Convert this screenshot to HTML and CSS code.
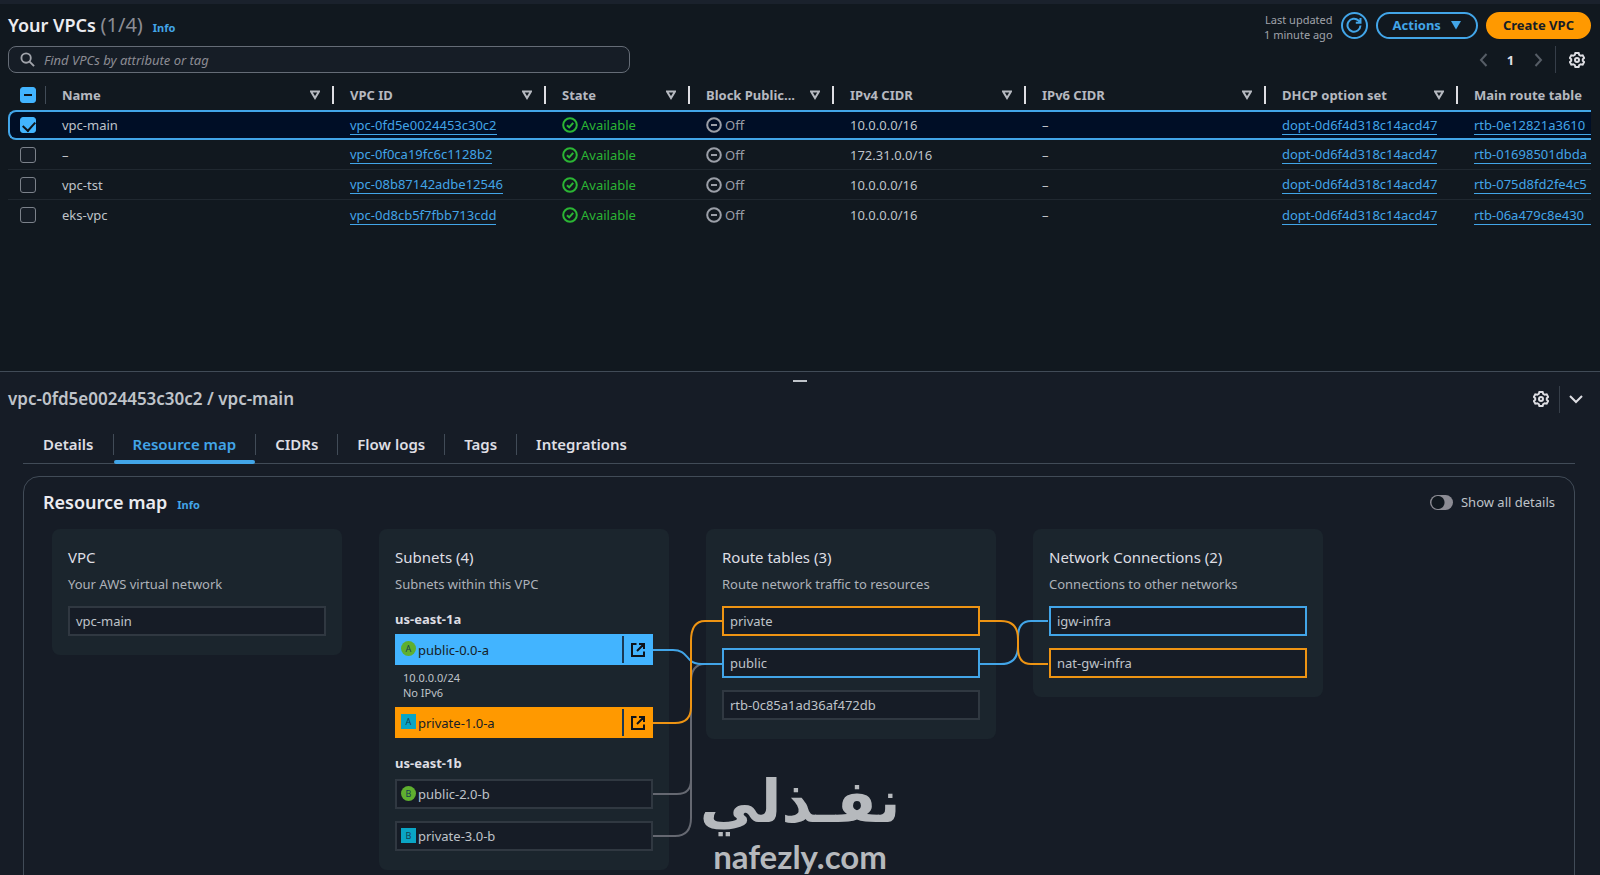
FILE: index.html
```html
<!DOCTYPE html>
<html lang="en">
<head>
<meta charset="utf-8">
<title>Your VPCs</title>
<link rel="stylesheet" href="styles.css">
</head>
<body>
<svg class="sprite" aria-hidden="true">
  <symbol id="gear" viewBox="0 0 16 16"><path d="M6.4 1h3.2l.6 1.9 1.5.9 2-.5 1.5 2.7-1.4 1.3v1.4l1.4 1.3-1.5 2.7-2-.5-1.5.9-.6 1.9H6.4l-.6-1.9-1.5-.9-2 .5L.8 10l1.4-1.3V7.300L.8 6l1.5-2.700 2 .5 1.500-.9z"/><circle cx="8" cy="8" r="2"/></symbol>
  <symbol id="sort" viewBox="0 0 10 10"><path d="M1 1.500h8L5 8z"/></symbol>
  <symbol id="ok" viewBox="0 0 16 16"><circle cx="8" cy="8" r="6.800"/><path d="M5 8.200l2.200 2.200 4-4.600"/></symbol>
  <symbol id="off" viewBox="0 0 16 16"><circle cx="8" cy="8" r="6.800"/><path d="M5 8h6"/></symbol>
  <symbol id="external" viewBox="0 0 16 16"><path d="M6.500 2H2v12h12V9.500M9 2h5v5M14 2L7 9"/></symbol>
</svg>

<main class="list">
  <header class="list-head">
    <h1 class="title">Your VPCs <span class="count">(1/4)</span></h1>
    <a class="info" href="#info">Info</a>
    <div class="actions">
      <p class="updated">Last updated<br>1 minute ago</p>
      <button class="btn round" aria-label="Refresh"><svg class="icon" viewBox="0 0 16 16"><path d="M14.500 8.500A6.500 6.500 0 1 1 12.500 3.500L14 5M14.500 1v4.800H9.800"/></svg></button>
      <button class="btn">Actions <svg class="caret" viewBox="0 0 10 10"><path d="M0 1h10L5 9.500z"/></svg></button>
      <button class="btn primary">Create VPC</button>
    </div>
  </header>
  <div class="tools">
    <label class="search">
      <svg class="icon" viewBox="0 0 16 16"><circle cx="6.500" cy="6.500" r="5"/><path d="M10.200 10.200L15 15"/></svg>
      <input type="search" aria-label="Find VPCs" placeholder="Find VPCs by attribute or tag">
    </label>
    <nav class="pager" aria-label="Pages">
      <button class="bare dim" aria-label="Previous page"><svg class="icon" viewBox="0 0 16 16"><path d="M10.500 2L5 8l5.500 6"/></svg></button>
      <button class="bare page">1</button>
      <button class="bare dim" aria-label="Next page"><svg class="icon" viewBox="0 0 16 16"><path d="M5.500 2L11 8l-5.500 6"/></svg></button>
      <button class="bare prefs" aria-label="Preferences"><svg class="icon"><use href="#gear"/></svg></button>
    </nav>
  </div>
  <div class="table-wrap">
    <table>
      <colgroup><col class="c-check"><col class="c-name"><col class="c-id"><col class="c-small"><col class="c-small"><col class="c-mid"><col class="c-v6"><col class="c-mid"><col class="c-mid"></colgroup>
      <thead>
        <tr>
          <th><input type="checkbox" class="some" aria-label="Select all"></th>
          <th><div class="th"><span>Name</span><svg class="sort"><use href="#sort"/></svg></div></th>
          <th><div class="th"><span>VPC ID</span><svg class="sort"><use href="#sort"/></svg></div></th>
          <th><div class="th"><span>State</span><svg class="sort"><use href="#sort"/></svg></div></th>
          <th><div class="th"><span>Block Public...</span><svg class="sort"><use href="#sort"/></svg></div></th>
          <th><div class="th"><span>IPv4 CIDR</span><svg class="sort"><use href="#sort"/></svg></div></th>
          <th><div class="th"><span>IPv6 CIDR</span><svg class="sort"><use href="#sort"/></svg></div></th>
          <th><div class="th"><span>DHCP option set</span><svg class="sort"><use href="#sort"/></svg></div></th>
          <th><div class="th"><span>Main route table</span></div></th>
        </tr>
      </thead>
      <tbody>
        <tr class="selected">
          <td><input type="checkbox" checked aria-label="Select vpc-main"></td><td>vpc-main</td>
          <td><a href="#v1">vpc-0fd5e0024453c30c2</a></td>
          <td><span class="state ok"><svg class="icon"><use href="#ok"/></svg>Available</span></td>
          <td><span class="state"><svg class="icon"><use href="#off"/></svg>Off</span></td>
          <td>10.0.0.0/16</td><td>–</td><td><a href="#d1">dopt-0d6f4d318c14acd47</a></td><td><a class="wide" href="#r1">rtb-0e12821a3610</a></td>
        </tr>
        <tr>
          <td><input type="checkbox" aria-label="Select unnamed VPC"></td><td>–</td>
          <td><a href="#v2">vpc-0f0ca19fc6c1128b2</a></td>
          <td><span class="state ok"><svg class="icon"><use href="#ok"/></svg>Available</span></td>
          <td><span class="state"><svg class="icon"><use href="#off"/></svg>Off</span></td>
          <td>172.31.0.0/16</td><td>–</td><td><a href="#d2">dopt-0d6f4d318c14acd47</a></td><td><a class="wide" href="#r2">rtb-01698501dbda</a></td>
        </tr>
        <tr>
          <td><input type="checkbox" aria-label="Select vpc-tst"></td><td>vpc-tst</td>
          <td><a href="#v3">vpc-08b87142adbe12546</a></td>
          <td><span class="state ok"><svg class="icon"><use href="#ok"/></svg>Available</span></td>
          <td><span class="state"><svg class="icon"><use href="#off"/></svg>Off</span></td>
          <td>10.0.0.0/16</td><td>–</td><td><a href="#d3">dopt-0d6f4d318c14acd47</a></td><td><a class="wide" href="#r3">rtb-075d8fd2fe4c5</a></td>
        </tr>
        <tr>
          <td><input type="checkbox" aria-label="Select eks-vpc"></td><td>eks-vpc</td>
          <td><a href="#v4">vpc-0d8cb5f7fbb713cdd</a></td>
          <td><span class="state ok"><svg class="icon"><use href="#ok"/></svg>Available</span></td>
          <td><span class="state"><svg class="icon"><use href="#off"/></svg>Off</span></td>
          <td>10.0.0.0/16</td><td>–</td><td><a href="#d4">dopt-0d6f4d318c14acd47</a></td><td><a class="wide" href="#r4">rtb-06a479c8e430</a></td>
        </tr>
      </tbody>
    </table>
  </div>
</main>

<section class="panel">
  <div class="handle"></div>
  <header class="panel-head">
    <h2 class="panel-title">vpc-0fd5e0024453c30c2 / vpc-main</h2>
    <button class="bare" aria-label="Panel preferences"><svg class="icon"><use href="#gear"/></svg></button>
    <button class="bare close" aria-label="Close panel"><svg class="icon" viewBox="0 0 16 16"><path d="M2 5l6 6 6-6"/></svg></button>
  </header>
  <div class="panel-body">
    <nav class="tabs" role="tablist">
      <button role="tab" class="tab">Details</button>
      <button role="tab" class="tab active" aria-selected="true">Resource map</button>
      <button role="tab" class="tab">CIDRs</button>
      <button role="tab" class="tab">Flow logs</button>
      <button role="tab" class="tab">Tags</button>
      <button role="tab" class="tab">Integrations</button>
    </nav>
    <div class="map">
      <header class="map-head">
        <h2 class="title">Resource map</h2>
        <a class="info" href="#map-info">Info</a>
        <label class="toggle"><input type="checkbox">Show all details</label>
      </header>
      <div class="board">
        <section class="card">
          <h3>VPC</h3>
          <p>Your AWS virtual network</p>
          <div class="nodes"><div class="node">vpc-main</div></div>
        </section>
        <section class="card">
          <h3>Subnets (4)</h3>
          <p>Subnets within this VPC</p>
          <h4>us-east-1a</h4>
          <div class="node fill-blue"><span class="badge public">A</span>public-0.0-a<a class="open" href="#s1" aria-label="Open public-0.0-a"><svg class="icon"><use href="#external"/></svg></a></div>
          <div class="detail">10.0.0.0/24<br>No IPv6</div>
          <div class="node fill-orange"><span class="badge">A</span>private-1.0-a<a class="open" href="#s2" aria-label="Open private-1.0-a"><svg class="icon"><use href="#external"/></svg></a></div>
          <h4 class="second">us-east-1b</h4>
          <div class="nodes">
            <div class="node"><span class="badge public">B</span>public-2.0-b</div>
            <div class="node"><span class="badge">B</span>private-3.0-b</div>
          </div>
        </section>
        <section class="card">
          <h3>Route tables (3)</h3>
          <p>Route network traffic to resources</p>
          <div class="nodes">
            <div class="node orange">private</div>
            <div class="node blue">public</div>
            <div class="node">rtb-0c85a1ad36af472db</div>
          </div>
        </section>
        <section class="card">
          <h3>Network Connections (2)</h3>
          <p>Connections to other networks</p>
          <div class="nodes">
            <div class="node blue">igw-infra</div>
            <div class="node orange">nat-gw-infra</div>
          </div>
        </section>
        <svg class="wires" viewBox="0 0 1270 340" aria-hidden="true">
          <path class="w-gray" d="M601 265h24q14 0 14-14M601 307h22q16 0 16-18V153q0-18 14-18h17"/>
          <path class="w-blue" d="M601 121h20c10 0 12 5 17 10s10 4 14 4h18"/>
          <path class="w-orange" d="M601 194h22q16 0 16-16v-66q0-20 14-20h17"/>
          <path class="w-blue" d="M927 135h22q17 0 17-18v-9q0-16 13-16h17"/>
          <path class="w-orange" d="M927 92h22q17 0 17 18v9q0 16 13 16h17"/>
        </svg>
      </div>
    </div>
  </div>
</section>

<div class="watermark">
  <span class="mark-ar" lang="ar" dir="rtl">نفـذلي</span>
  <span class="mark-en">nafezly.com</span>
</div>
</body>
</html>
```

FILE: styles.css
```css
* { box-sizing: border-box; }

body {
  margin: 0;
  height: 100vh;
  display: flex;
  flex-direction: column;
  overflow: hidden;
  position: relative;
  background: #11181f;
  color: #bfc3c9;
  font: 13px/18px "Noto Sans", "Open Sans", sans-serif;
}

h1, h2, h3, h4, p { margin: 0; }
button, input { font: inherit; color: inherit; }
a { color: #42a5e8; }

.sprite { display: none; }

.icon {
  width: 16px;
  height: 16px;
  flex: none;
  fill: none;
  stroke: currentColor;
  stroke-width: 2;
}

.list {
  flex: none;
  height: 371px;
  padding: 8px 9px 0 8px;
  border-top: 4px solid #1a212c;
}

.list-head { display: flex; align-items: center; height: 26px; }
.title { font-size: 18px; line-height: 26px; font-weight: 600; color: #ebebf0; }
.count { font-size: 20px; font-weight: 400; color: #8c8c94; }
.info { margin: 6px 0 0 10px; font-size: 11px; font-weight: 700; text-decoration: none; }
.actions { display: flex; align-items: center; gap: 8px; margin-left: auto; }
.updated { padding-top: 4px; font-size: 11px; line-height: 15px; text-align: right; color: #a0a3aa; }

.btn {
  display: flex;
  align-items: center;
  gap: 10px;
  height: 27px;
  padding: 0 15px;
  border: 2px solid #42a5e8;
  border-radius: 14px;
  background: none;
  color: #42a5e8;
  font-weight: 700;
}
.btn.round { width: 27px; padding: 0; justify-content: center; }
.btn.primary { border-color: #ff9900; background: #ff9900; color: #161d26; }
.caret { width: 10px; height: 10px; fill: currentColor; }

.tools { display: flex; justify-content: space-between; margin-top: 8px; }
.search {
  display: flex;
  align-items: center;
  gap: 9px;
  width: 622px;
  height: 27px;
  padding: 0 11px;
  border: 1px solid #656c76;
  border-radius: 8px;
  background: #161d26;
  color: #a0a3aa;
}
.search .icon { width: 15px; height: 15px; }
.search input { flex: 1; border: 0; padding: 0; outline: 0; background: none; }
.search input::placeholder { color: #8c8c94; font-style: italic; opacity: 1; }

.pager { display: flex; align-items: center; }
.bare {
  display: flex;
  align-items: center;
  justify-content: center;
  width: 27px;
  height: 27px;
  padding: 0;
  border: 0;
  background: none;
  color: #dedee3;
}
.dim { color: #565d66; }
.page { font-weight: 700; }
.prefs { width: 36px; margin-left: 4px; padding-left: 7px; border-left: 1px solid #363e49; }

.table-wrap { margin-top: 7px; overflow: hidden; }
table { width: 1642px; table-layout: fixed; border-collapse: separate; border-spacing: 0; }
.c-check { width: 38px; }
.c-name { width: 288px; }
.c-id { width: 212px; }
.c-small { width: 144px; }
.c-mid { width: 192px; }
.c-v6 { width: 240px; }
th, td { height: 30px; padding: 0 0 0 16px; text-align: left; white-space: nowrap; }
th:first-child, td:first-child { padding-left: 12px; }
th { padding-right: 0; color: #b6b9c0; }
.th { display: flex; align-items: center; justify-content: space-between; padding-right: 12px; height: 18px; border-right: 2px solid #dedee3; }
th:first-child { background: linear-gradient(#414b57, #414b57) right center / 1px 18px no-repeat; }
.sort { width: 10px; height: 10px; fill: none; stroke: currentColor; stroke-width: 2; }
tbody td { border-bottom: 1px solid #202830; }
tbody tr:last-child td { border-bottom: 0; }
tbody .selected td { border-top: 2px solid #42a5e8; border-bottom: 2px solid #42a5e8; background: #000e26; }
tbody .selected td:first-child { border-left: 2px solid #42a5e8; border-radius: 8px 0 0 8px; padding-left: 10px; }
td a { display: inline-block; line-height: 18px; border-bottom: 1px solid #42a5e8; text-decoration: none; }
td .wide { width: 100%; }

table input {
  appearance: none;
  display: block;
  width: 16px;
  height: 16px;
  margin: 0;
  border: 1px solid #7b818a;
  border-radius: 3px;
  background: #161d26;
}
table input:checked, table .some { border-color: #42b4ff; background: #42b4ff; }
table input:checked::after {
  content: "";
  display: block;
  width: 6px;
  height: 10px;
  margin: 1px 0 0 4px;
  border: solid #0f141a;
  border-width: 0 2px 2px 0;
  transform: rotate(42deg);
}
table .some::after { content: ""; display: block; width: 8px; height: 2px; margin: 6px 3px; background: #0f141a; }

.state { display: flex; align-items: center; gap: 3px; color: #9b9fa8; }
.state.ok { color: #2bb534; }

.panel { flex: 1; min-height: 0; overflow: hidden; border-top: 1px solid #414b57; background: #161c26; }
.handle { width: 14px; height: 2px; margin: 8px auto 0; background: #bfc3c9; }
.panel-head { display: flex; align-items: center; height: 34px; padding: 0 9px 0 8px; }
.panel-title { margin-right: auto; font-size: 17px; line-height: 24px; font-weight: 600; }
.close { width: 32px; margin-left: 5px; border-left: 1px solid #363e49; }
.panel-body { padding: 0 25px 0 23px; }

.tabs { display: flex; height: 48px; padding-top: 11px; border-bottom: 1px solid #414b57; }
.tab {
  position: relative;
  height: 37px;
  padding: 0 19px 3px 20px;
  border: 0;
  background: none;
  color: #dedee3;
  font-size: 15px;
  font-weight: 600;
}
.tab + .tab::before { content: ""; position: absolute; left: 0; top: 7px; height: 21px; border-left: 1px solid #414b57; }
.active { color: #42a5e8; }
.active::after { content: ""; position: absolute; left: 1px; right: 0; bottom: 0; height: 4px; border-radius: 2px; background: #42a5e8; }

.map { margin-top: 12px; padding: 11px 19px 20px; border: 1px solid #414b57; border-radius: 16px; min-height: 500px; }
.map-head { display: flex; align-items: center; height: 28px; }
.toggle { display: flex; align-items: center; gap: 8px; margin-left: auto; }
.toggle input {
  appearance: none;
  width: 23px;
  height: 15px;
  margin: 0;
  border-radius: 8px;
  background: radial-gradient(circle at 8px 50%, #11181f 6px, #8c8c94 7px);
}

.board { position: relative; display: flex; align-items: flex-start; gap: 37px; margin: 13px 0 0 9px; }
.card { flex: none; width: 290px; padding: 17px 16px 19px; border-radius: 8px; background: #1b252d; }
.card h3 { font-size: 15px; line-height: 22px; font-weight: 400; color: #dedee3; }
.card p { margin: 7px 0 13px; color: #aeb2b9; }
.card h4 { margin: 17px 0 6px; font-size: 13px; line-height: 18px; color: #dedee3; }
.card .second { margin: 16px 0 7px; }
.nodes { display: grid; gap: 12px; }
.node { display: flex; align-items: center; height: 30px; padding: 0 6px; border: 2px solid #303841; background: #161c26; }
.blue { border-color: #42a5e8; }
.orange { border-color: #ee9413; }
.fill-blue, .fill-orange { height: 31px; padding-right: 0; border-color: #42b4ff; background: #42b4ff; color: #161d26; }
.fill-orange { border-color: #ff9900; background: #ff9900; }
.badge { width: 15px; height: 15px; margin: -2px 2px 0 -2px; background: #0aa5c5; color: #16404f; font-size: 9px; line-height: 15px; text-align: center; }
.badge.public { border-radius: 50%; background: #5faf2f; }
.open { display: flex; align-items: center; justify-content: center; align-self: stretch; width: 29px; margin-left: auto; border-left: 2px solid #1b3a55; color: #0f141a; }
.detail { padding: 5px 8px 7px; font-size: 11px; line-height: 15px; }

.wires { position: absolute; left: 0; top: 0; width: 1270px; height: 340px; fill: none; stroke-width: 2; pointer-events: none; }
.w-gray { stroke: #656871; }
.w-blue { stroke: #42a5e8; }
.w-orange { stroke: #ee9413; }

.watermark {
  position: absolute;
  left: 44%;
  bottom: 0;
  width: 192px;
  display: flex;
  flex-direction: column;
  align-items: center;
  color: #b6b9bd;
}
.mark-ar { font: 700 59px/70px "DejaVu Sans", sans-serif; white-space: nowrap; }
.mark-en { font: 700 33px/38px Lato, sans-serif; }
```
